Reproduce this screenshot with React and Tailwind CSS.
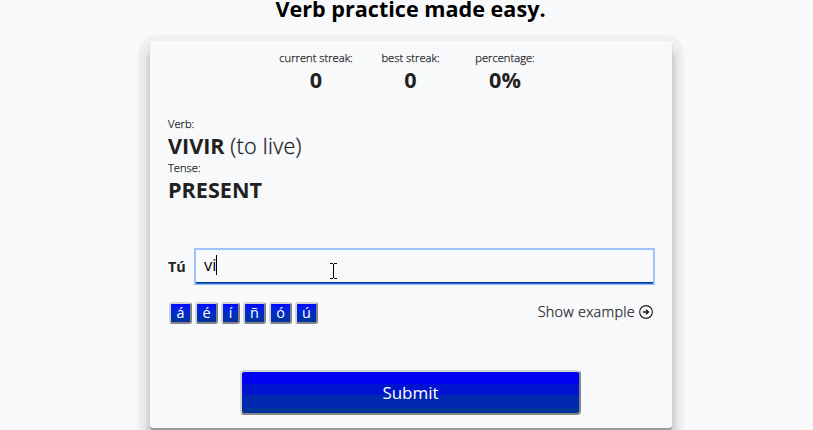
const stats = [
  { label: "current streak:", value: "0" },
  { label: "best streak:", value: "0" },
  { label: "percentage:", value: "0%" },
];

const accents = [
  { char: "á", width: "w-[23px]" },
  { char: "é", width: "w-[23px]" },
  { char: "í", width: "w-[19px]" },
  { char: "ñ", width: "w-[23px]" },
  { char: "ó", width: "w-[23px]" },
  { char: "ú", width: "w-[23px]" },
];

function ArrowCircle() {
  return (
    <svg className="size-[14px]" viewBox="0 0 14 14" fill="none" stroke="#212121" strokeWidth="1.15">
      <circle cx="7" cy="7" r="6.35" />
      <path d="M3.8 7H9" strokeWidth="1.5" />
      <path d="M7.2 4.3L10.2 7L7.2 9.7Z" fill="#212121" stroke="none" />
      <path d="M7 4.6L9.5 7L7 9.4" strokeWidth="1.1" />
    </svg>
  );
}

function TextCursor() {
  return (
    <svg className="absolute left-[134px] top-[13px] h-4 w-[7px]" viewBox="0 0 7 16" fill="none" stroke="#000" shapeRendering="crispEdges">
      <path d="M0 .5H3M4 .5H7M3.5 1V15M0 15.5H3M4 15.5H7" />
    </svg>
  );
}

export default function App() {
  return (
    <div className="flex h-[430px] w-[813px] flex-col items-center overflow-hidden bg-[#f8f9fb] font-['Open_Sans','Noto_Sans',sans-serif] text-[#212121]">
      <h1 className="pl-2 text-[21.6px] leading-[18px] font-bold whitespace-nowrap text-black">Verb practice made easy.</h1>
      <div className="mt-[23px] ml-[9px] shrink-0 rounded-[8px] shadow-[0_12px_2px_4px_rgba(0,0,0,0.07),0_9px_3px_8px_rgba(0,0,0,0.035),0_6px_1px_11.5px_rgba(0,0,0,0.035)]">
        <main className="flex h-[387px] w-[522px] flex-col rounded-[3px] bg-[#f8f9fb] pr-[17px] pl-[18px] shadow-[0_2px_1px_rgba(0,0,0,0.28)]">
          <div className="flex justify-center pt-2 pr-0.5">
            {stats.map((s) => (
              <div key={s.label} className="flex w-[94.5px] flex-col items-center whitespace-nowrap">
                <span className="text-[11.2px] leading-[18px] font-light [-webkit-text-stroke:0.25px]">{s.label}</span>
                <span className="text-[21.6px] leading-[26px] font-bold">{s.value}</span>
              </div>
            ))}
          </div>
          <div className="mt-[23px] flex flex-col whitespace-nowrap">
            <span className="text-[11.2px] leading-4 font-light [-webkit-text-stroke:0.25px]">Verb:</span>
            <span className="text-[21.6px] leading-7 font-bold">VIVIR <span className="font-light tracking-[0.3px] [-webkit-text-stroke:0.3px]">(to live)</span></span>
            <span className="text-[11.2px] leading-4 font-light [-webkit-text-stroke:0.25px]">Tense:</span>
            <span className="text-[21.6px] leading-7 font-bold">PRESENT</span>
          </div>
          <div className="mt-11 flex h-[37px]">
            <label className="w-[26px] text-[14.4px] leading-[38px] font-bold">Tú</label>
            <div className="relative flex h-[37px] w-[461px] items-start rounded-[1px] border-2 border-b border-[#a0c3fb] border-b-[#94b8fa] pt-[3px] pl-2 shadow-[inset_0_-1px_0_#2f6bd8,inset_0_-2px_0_#00359a]">
              <span className="text-[16.5px] leading-6 text-black">vi</span>
              <span className="mt-0.5 h-5 w-px bg-black" />
              <TextCursor />
            </div>
          </div>
          <div className="mt-[17px] flex h-[22px] justify-between pr-0.5 pl-px">
            <div className="flex gap-[3px]">
              {accents.map((a) => (
                <button key={a.char} className={`${a.width} flex h-[22px] items-center justify-center rounded-[3px] border-2 border-t-[#d3d3d5] border-r-[#858588] border-b-[#858588] border-l-[#d3d3d5] bg-linear-to-b from-[#0000ff] to-[#003399] text-[14.4px] leading-4 text-white`}>{a.char}</button>
              ))}
            </div>
            <div className="flex h-5 items-center gap-1">
              <span className="text-[14.4px] leading-5 font-light tracking-[0.27px] whitespace-nowrap [-webkit-text-stroke:0.25px]">Show example</span>
              <ArrowCircle />
            </div>
          </div>
          <button className="mt-[46px] ml-[72px] h-[45px] w-[341px] rounded-[4px] border-2 border-t-[#d3d3d5] border-r-[#858588] border-b-[#858588] border-l-[#d3d3d5] bg-[linear-gradient(#0000f2_0_12px,#0014cf_12px_23px,#0028ae_23px_36px,#003399_36px)] text-[17px] text-white">Submit</button>
        </main>
      </div>
    </div>
  );
}
